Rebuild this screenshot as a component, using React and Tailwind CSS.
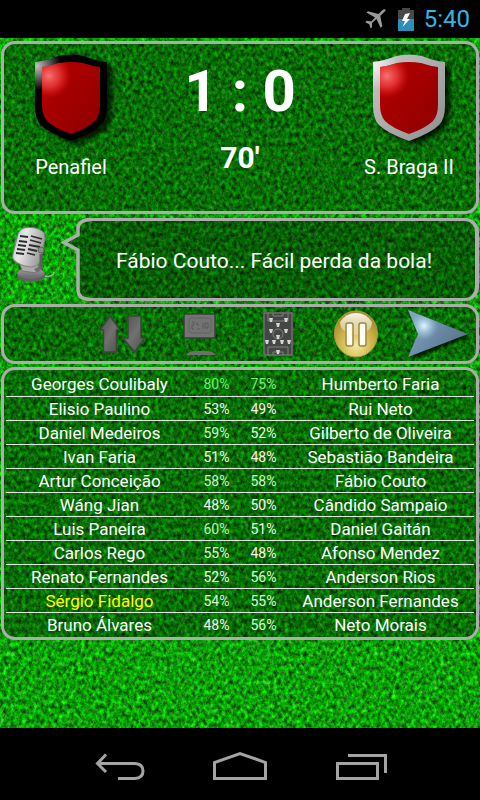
import React from "react";

const players = [
  { home: "Georges Coulibaly", homePct: 80, awayPct: 75, away: "Humberto Faria" },
  { home: "Elisio Paulino", homePct: 53, awayPct: 49, away: "Rui Neto" },
  { home: "Daniel Medeiros", homePct: 59, awayPct: 52, away: "Gilberto de Oliveira" },
  { home: "Ivan Faria", homePct: 51, awayPct: 48, away: "Sebastião Bandeira" },
  { home: "Artur Conceição", homePct: 58, awayPct: 58, away: "Fábio Couto" },
  { home: "Wáng Jian", homePct: 48, awayPct: 50, away: "Cândido Sampaio" },
  { home: "Luis Paneira", homePct: 60, awayPct: 51, away: "Daniel Gaitán" },
  { home: "Carlos Rego", homePct: 55, awayPct: 48, away: "Afonso Mendez" },
  { home: "Renato Fernandes", homePct: 52, awayPct: 56, away: "Anderson Rios" },
  { home: "Sérgio Fidalgo", homePct: 54, awayPct: 55, away: "Anderson Fernandes", booked: true },
  { home: "Bruno Álvares", homePct: 48, awayPct: 56, away: "Neto Morais" },
];

// The fitter the player, the greener the number
const pctColor = (pct) => {
  if (pct >= 80) return "text-[#62f462]";
  if (pct >= 70) return "text-[#7cf07c]";
  if (pct >= 60) return "text-[#b4f4b4]";
  if (pct >= 57) return "text-[#c4f8c4]";
  if (pct >= 54) return "text-[#d6fad6]";
  if (pct >= 51) return "text-[#eefcee]";
  return "text-[#fff2f2]";
};

function Grass() {
  return (
    <svg className="h-full w-full" aria-hidden="true">
      <filter id="grass" x="0" y="0" width="100%" height="100%" colorInterpolationFilters="sRGB">
        <feTurbulence type="fractalNoise" baseFrequency="0.27 0.21" numOctaves="4" seed="7" />
        <feColorMatrix
          values="0 0 0.5 0 -0.21
                  1.15 0 0.15 0 -0.04
                  0 0 0.4 0 -0.18
                  0 0 0 0 1"
        />
      </filter>
      <rect width="100%" height="100%" fill="#05a005" />
      <rect width="100%" height="100%" filter="url(#grass)" />
    </svg>
  );
}

function Panel({ className = "", children }) {
  return (
    <section className={`mx-px rounded-[14px] border-[3px] border-[#a9aea9] bg-black/30 ${className}`}>
      {children}
    </section>
  );
}

function Shield({ id, rim, rimDark }) {
  const outer =
    "M4 10 Q15 9 27 4 Q40 1 53 4 Q65 9 76 10 V54 Q76 67 70 73 Q62 81 40 89 Q18 81 10 73 Q4 67 4 54Z";
  const inner =
    "M11 15 Q19 14 28 11 Q40 9 52 11 Q61 14 69 15 V53 Q69 63 64 69 Q57 76 40 82 Q23 76 16 69 Q11 63 11 53Z";
  return (
    <svg width="88" height="96" viewBox="-4 0 88 96" aria-hidden="true">
      <defs>
        <linearGradient id={`${id}-rim`} x1="0" y1="0" x2="1" y2="1">
          <stop offset="0" stopColor={rim} />
          <stop offset="1" stopColor={rimDark} />
        </linearGradient>
        <linearGradient id={`${id}-red`} x1="0" y1="0" x2="1" y2="1">
          <stop offset="0" stopColor="#b80000" />
          <stop offset="1" stopColor="#8c0000" />
        </linearGradient>
        <radialGradient id={`${id}-shine`} gradientUnits="userSpaceOnUse" cx="18" cy="24" r="22">
          <stop offset="0" stopColor="#ff8080" stopOpacity="0.9" />
          <stop offset="0.5" stopColor="#ff5050" stopOpacity="0.6" />
          <stop offset="1" stopColor="#ff2020" stopOpacity="0" />
        </radialGradient>
        <radialGradient id={`${id}-glint`} gradientUnits="userSpaceOnUse" cx="6" cy="14" r="24">
          <stop offset="0" stopColor="#fff" stopOpacity="0.75" />
          <stop offset="1" stopColor="#fff" stopOpacity="0" />
        </radialGradient>
        <filter id={`${id}-blur`} x="-20%" y="-20%" width="140%" height="140%">
          <feGaussianBlur stdDeviation="2.5" />
        </filter>
      </defs>
      <path d={outer} transform="translate(5 4)" fill="#000" opacity="0.75" filter={`url(#${id}-blur)`} />
      <path d={outer} fill={`url(#${id}-rim)`} />
      <path d={outer} fill={`url(#${id}-glint)`} />
      <path d={inner} fill={`url(#${id}-red)`} />
      <path d={inner} fill={`url(#${id}-shine)`} />
    </svg>
  );
}

function Team({ id, name, rim, rimDark }) {
  return (
    <div className="flex w-[134px] flex-col items-center pt-2">
      <Shield id={id} rim={rim} rimDark={rimDark} />
      <h2 className="mt-[3px] text-xl leading-8">{name}</h2>
    </div>
  );
}

function StatusBar() {
  return (
    <header className="flex h-[38px] items-center justify-end bg-black pr-[10px]">
      <svg width="21" height="20" viewBox="0 0 21 20" fill="#9a9a9a" aria-label="Airplane mode">
        <path d="M20.500 0.500 Q19 -0.300 17 1.500 L13.500 5 L3 2.200 L1.500 3.600 L10 8.500 L6.300 12.600 L1.700 11.800 L0.300 13.200 L4.300 15.300 L5.500 19.200 L7 18.200 L7 14 L11.500 10 L15.600 18.800 L17.300 17.300 L15.300 6.800 L19 3.300 Q21 1.500 20.500 0.500Z" />
      </svg>
      <svg className="ml-3" width="16" height="24" viewBox="0 0 16 24" aria-label="Battery charging">
        <path d="M4 1 H12 V3 H16 V12 H0 V3 H4Z" fill="#484848" />
        <path d="M0 12 H16 V24 H0Z" fill="#2b8fb8" />
        <path d="M7 7 L12 6 L9 12 L12 12 L4.500 20 L7 14 L4 14Z" fill="#fff" />
      </svg>
      <time className="ml-[10px] text-2xl text-[#33b5e5]">5:40</time>
    </header>
  );
}

function Microphone() {
  return (
    <svg width="48" height="60" viewBox="0 0 48 60" aria-hidden="true">
      <defs>
        <linearGradient id="mic-head" x1="0" y1="0" x2="1" y2="0.4">
          <stop offset="0" stopColor="#b5b5b5" />
          <stop offset="0.4" stopColor="#e8e8e8" />
          <stop offset="1" stopColor="#9a9a9a" />
        </linearGradient>
        <linearGradient id="mic-base" x1="0" y1="0" x2="0" y2="1">
          <stop offset="0" stopColor="#a5a5a5" />
          <stop offset="1" stopColor="#666" />
        </linearGradient>
      </defs>
      <path d="M32 47 Q38 52 43 50 Q47 49 47 46" fill="none" stroke="#8fc08f" strokeWidth="1.500" />
      <ellipse cx="24" cy="50" rx="14" ry="6" fill="#606060" />
      <ellipse cx="24" cy="47" rx="13.500" ry="5" fill="url(#mic-base)" stroke="#777" />
      <path d="M13 38 L15 45 L30 47 L32 38Z" fill="#aaa" stroke="#777" />
      <path d="M30 23 L34 23 L34 42 Q34 46 29 46 L27 43 L31 41Z" fill="#707070" />
      <path d="M17 2 Q27 0 35 5 Q38 7 38 12 L34 34 Q31 41 24 41 Q13 40 7 34 Q5 32 6 28 L11 8 Q13 3 17 2Z" fill="url(#mic-head)" stroke="#808080" />
      <path d="M13 10 L21 11 M12 15 L20 16 M11 19 L19 20 M10 23 L18 24 M9 27 L17 28 M24 10 L35 13 M23 14 L34 17 M22 19 L33 21 M21 23 L30 25 M20 27 L28 29" stroke="#2c2c2c" strokeWidth="1.800" />
      <circle cx="34" cy="24" r="3" fill="#8d8d8d" stroke="#606060" />
      <path d="M34 28 L34 42" stroke="#606060" strokeWidth="3" />
    </svg>
  );
}

function Commentary({ children }) {
  return (
    <section className="mt-1 flex h-[83px] pr-px">
      <div className="w-[61px] pt-2 pl-[7px]">
        <Microphone />
      </div>
      <svg width="31" height="83" viewBox="0 0 31 83" aria-hidden="true">
        <path d="M31 1.500 H29 Q17 2 17 11 V17 L3 24.500 L17 32 V72 Q17 81 29 81.500 H31Z" fill="#000" fillOpacity="0.4" />
        <path d="M31 1.500 H29 Q17 2 17 11 V17 L3 24.500 L17 32 V72 Q17 81 29 81.500 H31" fill="none" stroke="#a9aea9" strokeWidth="3.500" />
      </svg>
      <div className="flex flex-1 items-center rounded-r-[14px] border-y-[3px] border-r-4 border-[#a9aea9] bg-black/40 pt-1 pl-6">
        <p className="text-[21px]">{children}</p>
      </div>
    </section>
  );
}

function SwapIcon() {
  return (
    <svg width="48" height="40" viewBox="0 0 48 40" aria-hidden="true">
      <defs>
        <linearGradient id="swap" x1="0" y1="0" x2="1" y2="1">
          <stop offset="0" stopColor="#4c4c4c" />
          <stop offset="0.500" stopColor="#717171" />
          <stop offset="1" stopColor="#4c4c4c" />
        </linearGradient>
      </defs>
      <g fill="url(#swap)" stroke="#3b473b" strokeWidth="1.500" strokeLinejoin="round">
        <path d="M12 2 L22 16 H18.500 V38 H5.500 V16 H2Z" />
        <path d="M30 2 H43 V24 H47 L36.500 38 L25 24 H30Z" />
      </g>
    </svg>
  );
}

function BoardIcon() {
  return (
    <svg width="36" height="44" viewBox="0 0 36 44" aria-hidden="true">
      <rect x="2" y="2" width="31" height="24" rx="1.500" fill="#747474" stroke="#3a403a" strokeWidth="1.500" />
      <rect x="7" y="6" width="22" height="15" rx="2" fill="none" stroke="#626262" />
      <path d="M10 10 H12 V13 H10 V17 H12 M15 10 V13 H17 M15 17 H18 M21 11 V17 M23 11 H26 V16 H23Z" fill="none" stroke="#595959" />
      <path d="M4 43 Q7 39 14 39 H24 Q31 39 34 43Z" fill="#6b706b" />
    </svg>
  );
}

function PitchIcon() {
  const shirts = [
    [8, 8], [23, 8], [15, 13], [8, 19], [23, 19], [15, 25],
    [4, 30], [11, 30], [19, 30], [26, 30], [15, 40],
  ];
  return (
    <svg width="30" height="44" viewBox="0 0 30 44" aria-hidden="true">
      <rect width="30" height="44" fill="#454745" />
      <g fill="none" stroke="#808280">
        <rect x="1" y="1" width="28" height="42" />
        <path d="M5 1 V9 H25 V1 M10 1 V4 H20 V1 M5 43 V35 H25 V43 M10 43 V40 H20 V43" />
        <circle cx="15" cy="22" r="5" />
      </g>
      {shirts.map(([x, y]) => (
        <path key={`${x}-${y}`} d={`M${x - 2} ${y - 2} H${x + 2} L${x + 1} ${y + 2} H${x - 1}Z`} fill="#d5d5d5" />
      ))}
    </svg>
  );
}

function PauseIcon() {
  return (
    <svg width="46" height="48" viewBox="0 0 46 48" aria-hidden="true">
      <defs>
        <radialGradient id="gold" cx="0.5" cy="0.75" r="0.65">
          <stop offset="0" stopColor="#f5e9a0" />
          <stop offset="0.550" stopColor="#d0b850" />
          <stop offset="1" stopColor="#a88d2c" />
        </radialGradient>
        <linearGradient id="gloss" x1="0" y1="0" x2="0" y2="1">
          <stop offset="0" stopColor="#fff" stopOpacity="0.9" />
          <stop offset="1" stopColor="#fff" stopOpacity="0.25" />
        </linearGradient>
      </defs>
      <ellipse cx="23" cy="24" rx="21.500" ry="23" fill="url(#gold)" stroke="#b39a45" />
      <path d="M7 12 Q13 3 23 3 Q33 3 39 12 Q39 23 23 25 Q7 23 7 12Z" fill="url(#gloss)" />
      <rect x="13" y="13" width="7" height="23" rx="2" fill="#fffdf0" stroke="#a08540" strokeWidth="1.500" />
      <rect x="26" y="13" width="7" height="23" rx="2" fill="#fffdf0" stroke="#a08540" strokeWidth="1.500" />
    </svg>
  );
}

function PlayIcon() {
  return (
    <svg width="75" height="54" viewBox="-7 0 75 54" aria-hidden="true">
      <defs>
        <linearGradient id="steel" x1="0" y1="0" x2="1" y2="0.6">
          <stop offset="0" stopColor="#85a8c5" />
          <stop offset="1" stopColor="#58728c" />
        </linearGradient>
        <radialGradient id="steel-shine" gradientUnits="userSpaceOnUse" cx="20" cy="19" r="14">
          <stop offset="0" stopColor="#e0f8ff" />
          <stop offset="1" stopColor="#a0d0f0" stopOpacity="0" />
        </radialGradient>
        <filter id="steel-blur">
          <feGaussianBlur stdDeviation="1.500" />
        </filter>
      </defs>
      <path d="M7 6 L67 29 L7 53 L17 29Z" fill="#000" opacity="0.7" filter="url(#steel-blur)" />
      <path d="M4 3 L64 27 L4 50 L14 27Z" fill="url(#steel)" />
      <path d="M4 3 L64 27 L4 50 L14 27Z" fill="url(#steel-shine)" />
    </svg>
  );
}

function ToolButton({ label, disabled, children }) {
  return (
    <button
      type="button"
      aria-label={label}
      disabled={disabled}
      className="flex w-[78px] items-center justify-center"
    >
      {children}
    </button>
  );
}

function PlayerTable() {
  return (
    <table className="w-full table-fixed border-collapse text-center text-[17px] leading-[21px]">
      <colgroup>
        <col />
        <col className="w-[47px]" />
        <col className="w-[47px]" />
        <col />
      </colgroup>
      <tbody>
        {players.map((p) => (
          <tr key={p.home} className="h-6 border-b border-[#e4e8e4] last:border-b-0">
            <td className={`p-0 pt-[2px] whitespace-nowrap ${p.booked ? "text-[#ffff00]" : ""}`}>{p.home}</td>
            <td className={`p-0 pt-[2px] text-sm leading-[21px] ${pctColor(p.homePct)}`}>{p.homePct}%</td>
            <td className={`p-0 pt-[2px] text-sm leading-[21px] ${pctColor(p.awayPct)}`}>{p.awayPct}%</td>
            <td className="p-0 pt-[2px] whitespace-nowrap">{p.away}</td>
          </tr>
        ))}
      </tbody>
    </table>
  );
}

function NavBar() {
  return (
    <nav className="flex h-[72px] items-center justify-center gap-[60px] bg-black pt-1">
      <button type="button" aria-label="Back">
        <svg width="60" height="32" viewBox="0 0 60 32" fill="none" stroke="#a3a3a3" strokeWidth="3">
          <path d="M7 13.500 H45 Q53 14 53 21 Q53 28 45 28.500 H28 M16 4.500 L7.500 13.500 L16 22" />
        </svg>
      </button>
      <button type="button" aria-label="Home">
        <svg width="60" height="32" viewBox="0 0 60 32" fill="none" stroke="#a3a3a3" strokeWidth="3">
          <path d="M4.500 28.500 V12.500 L30 3.500 L55.500 12.500 V28.500Z" />
        </svg>
      </button>
      <button type="button" aria-label="Recent apps">
        <svg width="60" height="32" viewBox="0 0 60 32" fill="none" stroke="#a3a3a3" strokeWidth="3">
          <path d="M7.500 13.500 H47.500 V28.500 H7.500Z M18 5.500 H55.500 V23" />
        </svg>
      </button>
    </nav>
  );
}

export default function App() {
  return (
    <div className="flex min-h-screen flex-col bg-black font-[Roboto,sans-serif] text-white">
      <StatusBar />

      <div className="grid flex-1 grid-cols-1 grid-rows-1">
        {/* turf sits in the same cell as the panels */}
        <div className="col-start-1 row-start-1 h-full">
          <Grass />
        </div>

        <main className="relative col-start-1 row-start-1 flex flex-col pt-[3px]">
          <Panel className="flex h-[173px] justify-between">
            <Team id="home" name="Penafiel" rim="#000" rimDark="#000" />
            <div className="flex flex-col items-center pt-3 font-bold">
              <h1 className="text-[58px] leading-[70px]">1 : 0</h1>
              <p className="mt-[14px] text-3xl">70'</p>
            </div>
            <Team id="away" name="S. Braga II" rim="#c8c8c8" rimDark="#8e8e8e" />
          </Panel>

          <Commentary>Fábio Couto... Fácil perda da bola!</Commentary>

          <Panel className="mt-[3px] flex h-[60px] items-stretch justify-end pr-[3px]">
            <ToolButton label="Substitutions" disabled>
              <SwapIcon />
            </ToolButton>
            <ToolButton label="Match board" disabled>
              <BoardIcon />
            </ToolButton>
            <ToolButton label="Line-up">
              <PitchIcon />
            </ToolButton>
            <ToolButton label="Pause">
              <PauseIcon />
            </ToolButton>
            <ToolButton label="Continue">
              <PlayIcon />
            </ToolButton>
          </Panel>

          <Panel className="mt-[3px] px-[2px] pt-[2px] pb-px">
            <PlayerTable />
          </Panel>
        </main>
      </div>

      <NavBar />
    </div>
  );
}
